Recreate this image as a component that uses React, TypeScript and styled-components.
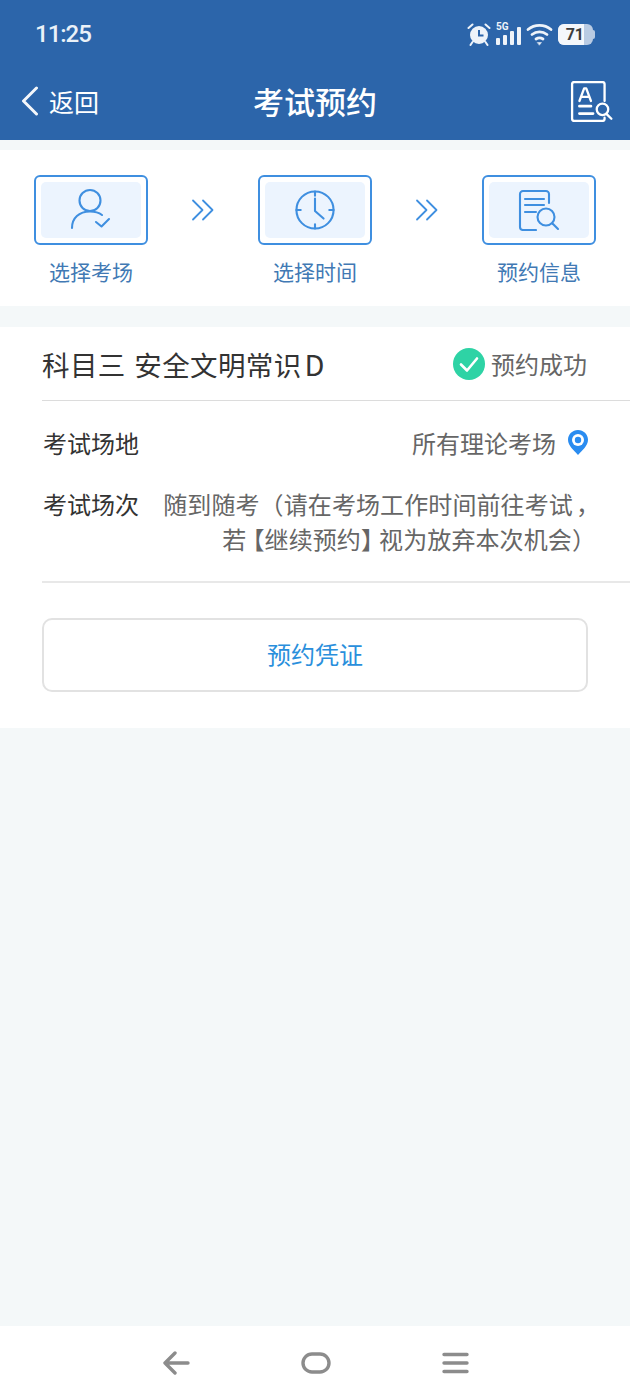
import React from 'react';
import styled, { createGlobalStyle } from 'styled-components';

const GlobalStyle = createGlobalStyle`
    html, body {
        margin: 0;
        padding: 0;
        background: #f4f8f9;
    }
    body {
        font-family: "Noto Sans CJK SC", "Noto Sans", sans-serif;
    }
`;

const Page = styled.div`
    width: 630px;
    height: 1400px;
    display: flex;
    flex-direction: column;
    background: #f4f8f9;
    overflow: hidden;
`;

const Header = styled.header`
    height: 140px;
    flex: none;
    background: #2c65aa;
    color: #fff;
`;

const StatusBar = styled.div`
    height: 68px;
    display: flex;
    align-items: center;
    justify-content: space-between;
    padding: 0 35px;
    box-sizing: border-box;
`;

const Clock = styled.span`
    font-family: Roboto, sans-serif;
    font-size: 24px;
    font-weight: 500;
    letter-spacing: -1px;
    color: #eaf1f8;
`;

const StatusIcons = styled.div`
    display: flex;
    align-items: center;
    gap: 5px;
`;

const Battery = styled.div`
    display: flex;
    align-items: center;
`;

const BatteryBody = styled.div`
    width: 35px;
    height: 21px;
    border-radius: 6px;
    overflow: hidden;
    background: #b9cbe3;
`;

const BatteryFill = styled.div`
    width: 26px;
    height: 100%;
    background: #f4f7fb;
    color: #3d3d3d;
    font-family: Roboto, sans-serif;
    font-size: 16px;
    font-weight: 700;
    line-height: 21px;
    text-align: right;
`;

const BatteryCap = styled.div`
    width: 2px;
    height: 9px;
    border-radius: 0 2px 2px 0;
    background: #b9cbe3;
`;

const NavBar = styled.div`
    height: 72px;
    display: grid;
    grid-template-columns: 1fr auto 1fr;
    align-items: center;
    padding: 0 21px 6px;
    box-sizing: border-box;
`;

const BackLink = styled.div`
    display: flex;
    align-items: center;
    gap: 10px;
    font-size: 25px;
    line-height: 36px;
`;

const Title = styled.h1`
    margin: 0;
    font-size: 31px;
    font-weight: 500;
    line-height: 44px;
`;

const NavAction = styled.div`
    display: flex;
    justify-content: flex-end;
    margin-right: -5px;
`;

const Steps = styled.section`
    flex: none;
    height: 156px;
    margin-top: 10px;
    padding: 25px 34px 0;
    box-sizing: border-box;
    display: flex;
    justify-content: space-between;
    background: #fff;
`;

const Step = styled.div`
    width: 114px;
    display: flex;
    flex-direction: column;
    align-items: center;
`;

const StepFrame = styled.div`
    width: 114px;
    height: 70px;
    padding: 5px;
    box-sizing: border-box;
    border: 2px solid #3f8fe0;
    border-radius: 6px;
    background: #fff;
`;

const StepInner = styled.div`
    height: 100%;
    display: flex;
    align-items: center;
    justify-content: center;
    border-radius: 5px;
    background: #ecf4fe;
`;

const StepLabel = styled.span`
    margin-top: 11px;
    font-size: 21px;
    line-height: 30px;
    color: #4179b4;
`;

const StepArrow = styled.div`
    height: 70px;
    display: flex;
    align-items: center;
`;

const Card = styled.section`
    flex: none;
    height: 401px;
    margin-top: 21px;
    box-sizing: border-box;
    padding-left: 42px;
    background: #fff;
`;

const CardHead = styled.div`
    height: 74px;
    box-sizing: border-box;
    padding-right: 43px;
    display: flex;
    align-items: center;
    justify-content: space-between;
    border-bottom: 1px solid #dcdcdc;
`;

const Subject = styled.h2`
    margin: 0;
    font-size: 27.5px;
    font-weight: 400;
    letter-spacing: 0.4px;
    word-spacing: 2px;
    line-height: 40px;
    color: #333;
`;

const SubjectGrade = styled.span`
    font-size: 29px;
    word-spacing: -4px;
`;

const SuccessTag = styled.div`
    display: flex;
    align-items: center;
    gap: 6px;
    font-size: 24px;
    line-height: 36px;
    color: #666;
`;

const Details = styled.div`
    height: 182px;
    padding: 24px 42px 0 0;
    box-sizing: border-box;
    display: flex;
    flex-direction: column;
    gap: 26px;
    border-bottom: 2px solid #e8e8e8;
`;

const DetailRow = styled.div`
    display: flex;
    align-items: flex-start;
    justify-content: space-between;
    gap: 20px;
    font-size: 24px;
    line-height: 35px;
`;

const DetailLabel = styled.span`
    flex: none;
    margin-left: 1px;
    color: #333;
`;

const DetailValue = styled.div`
    display: flex;
    align-items: center;
    gap: 12px;
    color: #666;
`;

const ValueLines = styled.div`
    text-align: right;
    white-space: nowrap;
    letter-spacing: 0.1px;
`;

// the reference squeezes its brackets and end punctuation below a full em
const TightPunct = styled.span<{ $before?: number; $after?: number }>`
    font-feature-settings: "halt";
    padding-left: ${props => props.$before ?? 0}px;
    padding-right: ${props => props.$after ?? 0}px;
`;

const VoucherButton = styled.button`
    display: block;
    width: 546px;
    height: 74px;
    margin-top: 35px;
    padding: 0 0 3px;
    border: 2px solid #e2e2e2;
    border-radius: 10px;
    background: #fff;
    color: #2a8fdc;
    font-family: inherit;
    font-size: 24px;
`;

const Spacer = styled.div`
    flex: 1;
`;

const SystemNav = styled.nav`
    flex: none;
    height: 74px;
    padding: 0 161px 0 162px;
    box-sizing: border-box;
    display: flex;
    align-items: center;
    justify-content: space-between;
    background: #fff;
`;

const AlarmIcon = () => (
    <svg width="24" height="24" viewBox="0 0 24 24" fill="none">
        <circle cx="12" cy="13" r="9" fill="#eef3f9" />
        <path d="M12 8v5.500h4.500" stroke="#2c65aa" strokeWidth="2" />
        <path d="M1.500 6 5.500 2.500M22.500 6l-4-3.500M5.500 20 3.500 23M18.500 20l2 3" stroke="#eef3f9" strokeWidth="2" strokeLinecap="round" />
    </svg>
);

const SignalIcon = () => (
    <svg width="25" height="24" viewBox="0 0 25 24">
        <text x="0" y="8" fontFamily="Roboto, sans-serif" fontSize="10" fontWeight="700" fill="#eef3f9">5G</text>
        <rect x="0" y="16" width="4" height="7" rx="1" fill="#eef3f9" />
        <rect x="7" y="13" width="4" height="10" rx="1" fill="#eef3f9" />
        <rect x="14" y="9" width="4" height="14" rx="1" fill="#eef3f9" />
        <rect x="21" y="5" width="4" height="18" rx="1" fill="#eef3f9" />
    </svg>
);

const WifiIcon = () => (
    <svg width="27" height="23" viewBox="0 0 27 23" fill="none" stroke="#eef3f9" strokeWidth="2.800" strokeLinecap="round">
        <path d="M2 6.500C8.500 1 18.500 1 25 6.500" />
        <path d="M6 11.500c4.500-3.500 10.500-3.500 15 0" />
        <path d="M10 16c2.200-1.500 4.800-1.500 7 0" />
        <path d="M11.500 19.500h4L13.500 22z" fill="#eef3f9" strokeWidth="0.500" />
    </svg>
);

const BackIcon = () => (
    <svg width="18" height="30" viewBox="0 0 18 30" fill="none" stroke="#f4f7fb" strokeWidth="3" strokeLinecap="round" strokeLinejoin="round">
        <path d="M15.500 2 2.500 15l13 13" />
    </svg>
);

const RecordSearchIcon = () => (
    <svg width="44" height="41" viewBox="0 0 42 39" fill="none" stroke="#fff" strokeWidth="2.200" strokeLinecap="round" strokeLinejoin="round">
        <path d="M33 19V3a2 2 0 0 0-2-2H4a2 2 0 0 0-2 2v33a2 2 0 0 0 2 2h27a2 2 0 0 0 2-2v-1" />
        <path d="M9 19l4.500-12h2L20 19M10.500 15h8" />
        <path d="M9 24h11M9 31h13" strokeWidth="2.600" />
        <circle cx="31" cy="27" r="5.500" />
        <path d="M35 31.500l4.500 4.500" />
    </svg>
);

const PersonIcon = () => (
    <svg width="42" height="44" viewBox="0 0 42 44" fill="none" stroke="#3f8fe0" strokeWidth="2.100" strokeLinecap="round" strokeLinejoin="round">
        <circle cx="20" cy="12.500" r="10.500" />
        <path d="M2 40c0-10 7-16.500 18-16.500 5 0 9 1.200 12 3.500" />
        <path d="M26 34l5.500 4.500L39 31" />
    </svg>
);

const ClockIcon = () => (
    <svg width="40" height="40" viewBox="0 0 42 42" fill="none" stroke="#3f8fe0" strokeWidth="2.200" strokeLinecap="round" strokeLinejoin="round">
        <circle cx="21" cy="21" r="19.500" />
        <path d="M21 1.500V6M21 36v4.500M1.500 21H6M36 21h4.500" />
        <path d="M21 9v13l9 8" />
    </svg>
);

const DocSearchIcon = () => (
    <svg width="42" height="42" viewBox="0 0 42 42" fill="none" stroke="#3f8fe0" strokeWidth="2.100" strokeLinecap="round" strokeLinejoin="round">
        <path d="M31 14V5a3 3 0 0 0-3-3H5a3 3 0 0 0-3 3v33a3 3 0 0 0 3 3h13" />
        <path d="M7 10h19M7 16h19M7 23h11" />
        <circle cx="28" cy="28" r="8.500" />
        <path d="M34.500 34.500l5.500 5.500" />
    </svg>
);

const DoubleChevron = () => (
    <svg width="24" height="22" viewBox="0 0 24 22" fill="none" stroke="#3f8fe0" strokeWidth="1.800" strokeLinecap="round" strokeLinejoin="round">
        <path d="M2 1.500 11.500 11 2 20.500M12 1.500 21.500 11 12 20.500" />
    </svg>
);

const CheckBadge = () => (
    <svg width="32" height="32" viewBox="0 0 32 32">
        <circle cx="16" cy="16" r="16" fill="#2ed3a5" />
        <path d="M8 16.500l6 6L24 10.500" fill="none" stroke="#fff" strokeWidth="2.600" strokeLinecap="round" strokeLinejoin="round" />
    </svg>
);

const PinIcon = () => (
    <svg width="20" height="25" viewBox="0 0 20 25">
        <path d="M10 0C4.500 0 0 4.300 0 9.700 0 15.500 6 20.500 10 25c4-4.500 10-9.500 10-15.300C20 4.300 15.500 0 10 0z" fill="#2a8cf0" />
        <circle cx="10" cy="10" r="6" fill="#fff" />
        <circle cx="10" cy="10" r="3.200" fill="#2a8cf0" />
    </svg>
);

const NavBackIcon = () => (
    <svg width="28" height="24" viewBox="0 0 28 24" fill="none" stroke="#8c8c8c" strokeWidth="3.400" strokeLinecap="round" strokeLinejoin="round">
        <path d="M26 12H3M13 2 3 12l10 10" />
    </svg>
);

const NavHomeIcon = () => (
    <svg width="30" height="22" viewBox="0 0 30 22" fill="none" stroke="#8c8c8c" strokeWidth="3.400">
        <rect x="2" y="2" width="26" height="18" rx="9" />
    </svg>
);

const NavMenuIcon = () => (
    <svg width="27" height="22" viewBox="0 0 27 22" fill="none" stroke="#8c8c8c" strokeWidth="3.400" strokeLinecap="round">
        <path d="M2 2.500h23M2 11h23M2 19.500h23" />
    </svg>
);

const steps = [
    { label: '选择考场', icon: <PersonIcon /> },
    { label: '选择时间', icon: <ClockIcon /> },
    { label: '预约信息', icon: <DocSearchIcon /> },
];

export default function App() {
    return (
        <Page>
            <GlobalStyle />
            <Header>
                <StatusBar>
                    <Clock>11:25</Clock>
                    <StatusIcons>
                        <AlarmIcon />
                        <SignalIcon />
                        <WifiIcon />
                        <Battery>
                            <BatteryBody>
                                <BatteryFill>71</BatteryFill>
                            </BatteryBody>
                            <BatteryCap />
                        </Battery>
                    </StatusIcons>
                </StatusBar>
                <NavBar>
                    <BackLink>
                        <BackIcon />
                        返回
                    </BackLink>
                    <Title>考试预约</Title>
                    <NavAction>
                        <RecordSearchIcon />
                    </NavAction>
                </NavBar>
            </Header>

            <Steps>
                {steps.map((step, index) => (
                    <React.Fragment key={step.label}>
                        {index > 0 && (
                            <StepArrow>
                                <DoubleChevron />
                            </StepArrow>
                        )}
                        <Step>
                            <StepFrame>
                                <StepInner>{step.icon}</StepInner>
                            </StepFrame>
                            <StepLabel>{step.label}</StepLabel>
                        </Step>
                    </React.Fragment>
                ))}
            </Steps>

            <Card>
                <CardHead>
                    <Subject>
                        科目三 安全文明常识
                        <SubjectGrade>{' D'}</SubjectGrade>
                    </Subject>
                    <SuccessTag>
                        <CheckBadge />
                        预约成功
                    </SuccessTag>
                </CardHead>
                <Details>
                    <DetailRow>
                        <DetailLabel>考试场地</DetailLabel>
                        <DetailValue>
                            所有理论考场
                            <PinIcon />
                        </DetailValue>
                    </DetailRow>
                    <DetailRow>
                        <DetailLabel>考试场次</DetailLabel>
                        <DetailValue>
                            <ValueLines>
                                随到随考（请在考场工作时间前往考试
                                <TightPunct $before={3}>，</TightPunct>
                                <br />
                                若<TightPunct $before={6}>【</TightPunct>继续预约
                                <TightPunct $after={6}>】</TightPunct>视为放弃本次机会
                                <TightPunct $after={4}>）</TightPunct>
                            </ValueLines>
                        </DetailValue>
                    </DetailRow>
                </Details>
                <VoucherButton>预约凭证</VoucherButton>
            </Card>

            <Spacer />

            <SystemNav>
                <NavBackIcon />
                <NavHomeIcon />
                <NavMenuIcon />
            </SystemNav>
        </Page>
    );
}
